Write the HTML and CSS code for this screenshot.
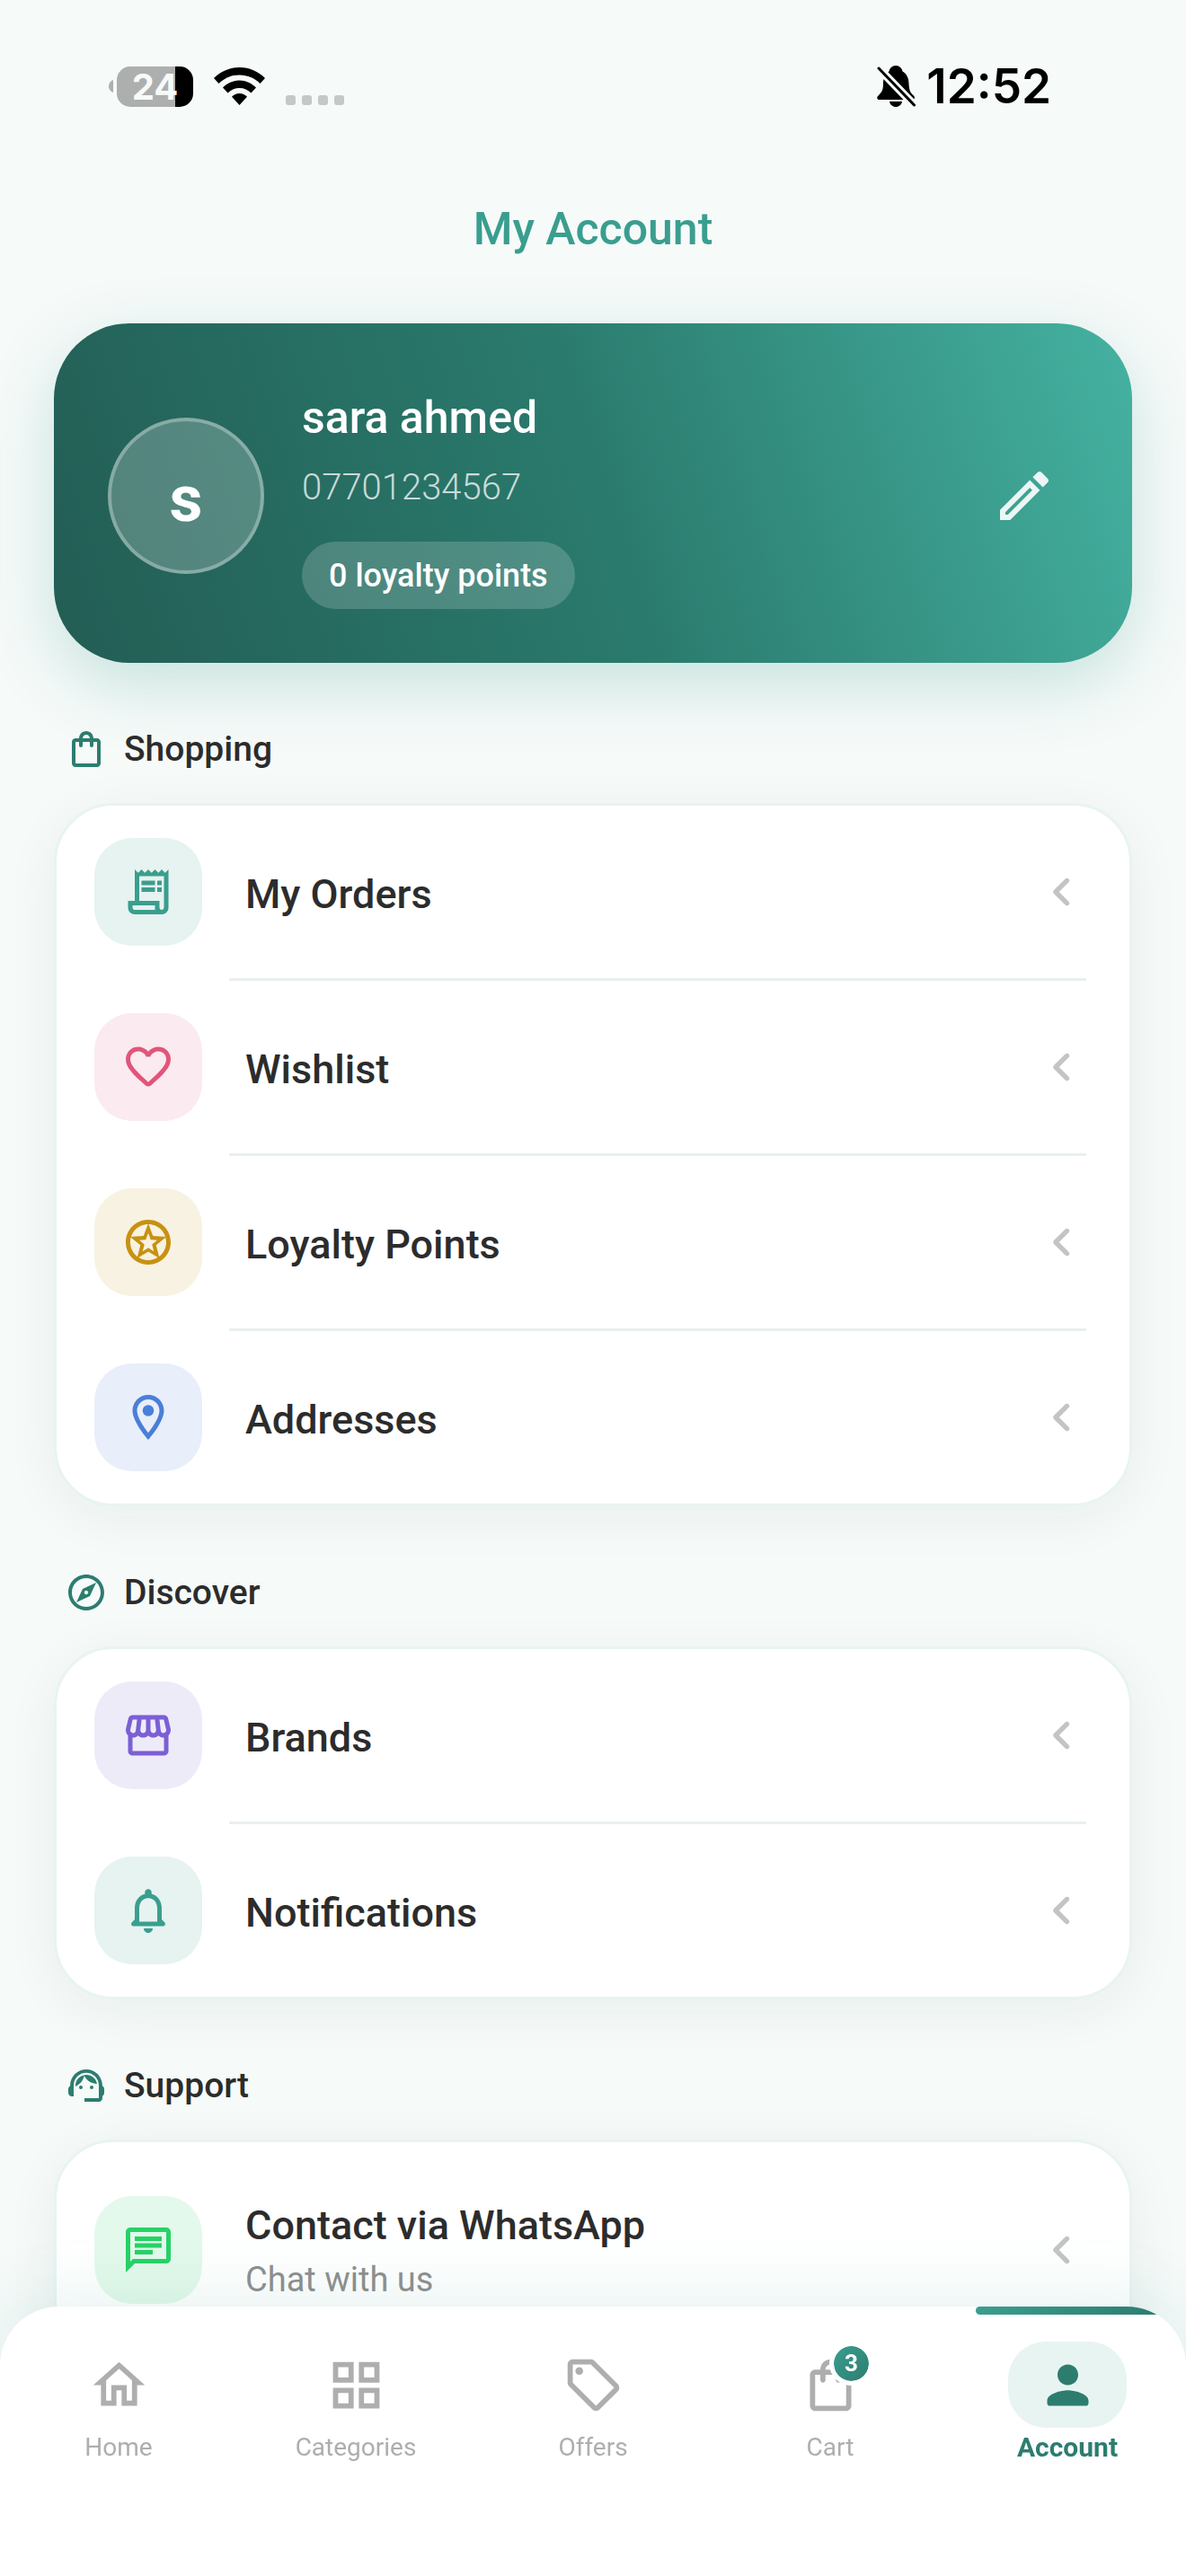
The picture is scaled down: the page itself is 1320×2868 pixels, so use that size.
FILE: index.html
```html
<!DOCTYPE html>
<html lang="en">
<head>
    <meta charset="UTF-8">
    <meta name="viewport" content="width=device-width, initial-scale=1.0">
    <title>My Account</title>
    <link rel="stylesheet" href="styles.css">
</head>
<body>
    <div class="status-bar">
        <div class="status-group">
            <div class="battery">
                <svg class="battery-tip" viewBox="0 0 5 14"><path d="M5 0C2 1 0 4 0 7s2 6 5 7z"/></svg>
                <span class="battery-level">24</span>
            </div>
            <svg class="wifi-icon" viewBox="0 0 57 42">
                <path d="M28.500 0C17.500 0 7.500 4.500 0 12l5.500 6C11.500 12 19.500 8.600 28.500 8.600S45.500 12 51.500 18l5.500-6C49.500 4.500 39.500 0 28.500 0z"/>
                <path d="M28.500 14.500c-7 0-13.500 3-18.500 8l5.500 6c3.500-3.500 8-5.500 13-5.500s9.500 2 13 5.500l5.500-6c-5-5-11.500-8-18.500-8z"/>
                <path d="M28.500 29c-3.300 0-6.300 1.300-8.500 3.800l8.500 9.200 8.500-9.200C34.800 30.300 31.800 29 28.500 29z"/>
            </svg>
            <div class="signal"><i></i><i></i><i></i><i></i></div>
        </div>
        <div class="status-group status-time">
            <svg class="mute-icon" viewBox="0 0 43 46">
                <path d="M21 0c-4 0-7 3-7.500 6.500C9 9 7 14 7 20c0 8-2 10-5.500 13.500C-1 36 .5 38 3 38h36c2.500 0 4-2 2-4.500C37 30 36 28 35.500 20 35.500 14 33 9 28.500 6.500 28 3 25 0 21 0z"/>
                <path d="M14 40h14c-.5 3.500-3.500 6-7 6s-6.500-2.500-7-6z"/>
                <path d="M2 3l39.500 41" stroke="#f6faf9" stroke-width="9"/>
                <path d="M2 3l39.500 41" stroke="#000" stroke-width="3" stroke-linecap="round"/>
            </svg>
            <span>12:52</span>
        </div>
    </div>

    <header class="app-header">
        <h1 class="app-title">My Account</h1>
    </header>

    <main>
        <section class="profile-card">
            <div class="avatar">s</div>
            <div class="profile-info">
                <h2 class="profile-name">sara ahmed</h2>
                <p class="profile-phone">07701234567</p>
                <span class="points-pill">0 loyalty points</span>
            </div>
            <button class="edit-btn" aria-label="Edit profile">
                <svg viewBox="0 0 24 24"><use href="#edit-icon"></use></svg>
            </button>
        </section>

        <section>
            <h2 class="section-title"><svg viewBox="0 0 24 24"><use href="#bag-icon"></use></svg>Shopping</h2>
            <ul class="menu-card">
                <li>
                    <a href="#orders" class="menu-item">
                        <span class="tile tile--teal"><svg viewBox="0 0 24 24"><use href="#receipt-icon"></use></svg></span>
                        <span class="menu-label">My Orders</span>
                        <svg class="chevron" viewBox="0 0 24 24"><use href="#chevron-icon"></use></svg>
                    </a>
                </li>
                <li>
                    <a href="#wishlist" class="menu-item">
                        <span class="tile tile--pink"><svg viewBox="0 0 24 24"><use href="#heart-icon"></use></svg></span>
                        <span class="menu-label">Wishlist</span>
                        <svg class="chevron" viewBox="0 0 24 24"><use href="#chevron-icon"></use></svg>
                    </a>
                </li>
                <li>
                    <a href="#points" class="menu-item">
                        <span class="tile tile--gold"><svg viewBox="0 0 24 24"><use href="#stars-icon"></use></svg></span>
                        <span class="menu-label">Loyalty Points</span>
                        <svg class="chevron" viewBox="0 0 24 24"><use href="#chevron-icon"></use></svg>
                    </a>
                </li>
                <li>
                    <a href="#addresses" class="menu-item">
                        <span class="tile tile--blue"><svg viewBox="0 0 24 24"><use href="#pin-icon"></use></svg></span>
                        <span class="menu-label">Addresses</span>
                        <svg class="chevron" viewBox="0 0 24 24"><use href="#chevron-icon"></use></svg>
                    </a>
                </li>
            </ul>
        </section>

        <section>
            <h2 class="section-title"><svg viewBox="0 0 24 24"><use href="#compass-icon"></use></svg>Discover</h2>
            <ul class="menu-card">
                <li>
                    <a href="#brands" class="menu-item">
                        <span class="tile tile--purple"><svg viewBox="0 0 24 24"><use href="#store-icon"></use></svg></span>
                        <span class="menu-label">Brands</span>
                        <svg class="chevron" viewBox="0 0 24 24"><use href="#chevron-icon"></use></svg>
                    </a>
                </li>
                <li>
                    <a href="#notifications" class="menu-item">
                        <span class="tile tile--teal"><svg viewBox="0 0 24 24"><use href="#bell-icon"></use></svg></span>
                        <span class="menu-label">Notifications</span>
                        <svg class="chevron" viewBox="0 0 24 24"><use href="#chevron-icon"></use></svg>
                    </a>
                </li>
            </ul>
        </section>

        <section>
            <h2 class="section-title"><svg viewBox="0 0 24 24"><use href="#support-icon"></use></svg>Support</h2>
            <ul class="menu-card">
                <li>
                    <a href="#whatsapp" class="menu-item menu-item--tall">
                        <span class="tile tile--green"><svg viewBox="0 0 24 24"><use href="#chat-icon"></use></svg></span>
                        <span class="menu-label">Contact via WhatsApp<small class="menu-hint">Chat with us</small></span>
                        <svg class="chevron" viewBox="0 0 24 24"><use href="#chevron-icon"></use></svg>
                    </a>
                </li>
            </ul>
        </section>
    </main>

    <nav class="bottom-nav">
        <a href="#home" class="nav-item">
            <span class="nav-icon"><svg viewBox="0 0 24 24"><use href="#home-icon"></use></svg></span>
            Home
        </a>
        <a href="#categories" class="nav-item">
            <span class="nav-icon"><svg viewBox="0 0 24 24"><use href="#grid-icon"></use></svg></span>
            Categories
        </a>
        <a href="#offers" class="nav-item">
            <span class="nav-icon"><svg viewBox="0 0 24 24"><use href="#tag-icon"></use></svg></span>
            Offers
        </a>
        <a href="#cart" class="nav-item">
            <span class="nav-icon"><svg viewBox="0 0 24 24"><use href="#bag-icon"></use></svg><span class="cart-badge">3</span></span>
            Cart
        </a>
        <a href="#account" class="nav-item nav-item--active" aria-current="page">
            <span class="nav-icon"><svg viewBox="0 0 24 24"><use href="#person-icon"></use></svg></span>
            Account
        </a>
    </nav>

    <svg style="display: none;">
        <symbol id="edit-icon" viewBox="0 0 24 24">
            <path d="M14.060 9.020l.92.92L5.920 19H5v-.92l9.060-9.060M17.660 3c-.25 0-.51.1-.7.29l-1.830 1.830 3.750 3.750 1.830-1.830c.39-.39.39-1.020 0-1.410l-2.340-2.340c-.2-.2-.45-.29-.71-.29zm-3.600 3.190L3 17.250V21h3.750L17.810 9.940l-3.750-3.750z"/>
        </symbol>
        <symbol id="bag-icon" viewBox="0 0 24 24">
            <path d="M18 6h-2c0-2.210-1.790-4-4-4S8 3.790 8 6H6c-1.100 0-2 .9-2 2v12c0 1.100.9 2 2 2h12c1.100 0 2-.9 2-2V8c0-1.100-.9-2-2-2zm-6-2c1.100 0 2 .9 2 2h-4c0-1.100.9-2 2-2zm6 16H6V8h2v2c0 .55.45 1 1 1s1-.45 1-1V8h4v2c0 .55.45 1 1 1s1-.45 1-1V8h2v12z"/>
        </symbol>
        <symbol id="receipt-icon" viewBox="0 0 24 24">
            <path d="M19.500 3.500L18 2l-1.500 1.500L15 2l-1.500 1.500L12 2l-1.500 1.500L9 2 7.500 3.500 6 2v14H3v3c0 1.660 1.340 3 3 3h12c1.660 0 3-1.340 3-3V2l-1.500 1.500zM15 20H6c-.55 0-1-.45-1-1v-1h10v2zm4-1c0 .55-.45 1-1 1s-1-.45-1-1v-3H8V5h11v14z"/>
            <path d="M9 7h6v2H9zM16 7h2v2h-2zM9 10h6v2H9zM16 10h2v2h-2z"/>
        </symbol>
        <symbol id="heart-icon" viewBox="0 0 24 24">
            <path d="M19.660 3.990c-2.640-1.800-5.900-.96-7.660 1.100-1.760-2.060-5.020-2.910-7.660-1.100-1.400.96-2.280 2.580-2.340 4.290-.14 3.880 3.300 6.990 8.550 11.760l.1.090c.76.69 1.930.69 2.690-.01l.11-.1c5.250-4.760 8.680-7.870 8.550-11.750-.06-1.700-.94-3.320-2.340-4.280zM12.100 18.550l-.1.1-.1-.1C7.140 14.240 4 11.390 4 8.500 4 6.500 5.500 5 7.500 5c1.540 0 3.040.99 3.570 2.360h1.870C13.460 5.990 14.960 5 16.500 5c2 0 3.500 1.500 3.500 3.500 0 2.890-3.140 5.740-7.900 10.050z"/>
        </symbol>
        <symbol id="stars-icon" viewBox="0 0 24 24">
            <path d="M12 2C6.480 2 2 6.480 2 12s4.480 10 10 10 10-4.480 10-10S17.520 2 12 2zm0 18c-4.420 0-8-3.580-8-8s3.580-8 8-8 8 3.580 8 8-3.580 8-8 8z"/>
            <path fill-rule="evenodd" d="M12 3.600l2.100 5.600 6 .4-4.600 3.700 1.500 5.900-5-3-5 3 1.500-5.900-4.600-3.700 6-.4zM12 7.900l-1.100 3-2.900.2 2.300 1.900-.8 3.100 2.500-1.600 2.500 1.600-.8-3.100 2.300-1.900-2.900-.2z"/>
        </symbol>
        <symbol id="pin-icon" viewBox="0 0 24 24">
            <path d="M12 2C8.130 2 5 5.130 5 9c0 5.250 7 13 7 13s7-7.750 7-13c0-3.870-3.130-7-7-7zM7 9c0-2.760 2.240-5 5-5s5 2.240 5 5c0 2.880-2.880 7.190-5 9.880C9.920 16.210 7 11.850 7 9z"/>
            <circle cx="12" cy="9" r="2.500"/>
        </symbol>
        <symbol id="compass-icon" viewBox="0 0 24 24">
            <path d="M12 2C6.480 2 2 6.480 2 12s4.480 10 10 10 10-4.480 10-10S17.520 2 12 2zm0 18c-4.410 0-8-3.590-8-8s3.590-8 8-8 8 3.590 8 8-3.590 8-8 8zm-5.500-2.500l7.510-3.490L17.500 6.500 9.990 9.990 6.500 17.500zm5.500-6.600c.61 0 1.100.49 1.100 1.100s-.49 1.100-1.100 1.100-1.100-.49-1.100-1.100.49-1.100 1.100-1.100z"/>
        </symbol>
        <symbol id="store-icon" viewBox="0 0 24 24">
            <path d="M21.900 8.890l-1.050-4.370c-.22-.9-1-1.520-1.910-1.520H5.050c-.9 0-1.690.63-1.900 1.520L2.100 8.890c-.24 1.020-.02 2.060.62 2.880.08.11.19.19.28.29V19c0 1.100.9 2 2 2h14c1.100 0 2-.9 2-2v-6.940c.09-.09.2-.18.28-.28.64-.82.87-1.870.62-2.890zm-2.990-3.900l1.050 4.370c.1.42.01.84-.25 1.170-.14.18-.44.47-.94.47-.61 0-1.140-.49-1.210-1.140L16.980 5l1.930-.01zM13 5h1.960l.54 4.520c.05.39-.07.78-.33 1.070-.22.26-.54.41-.95.41-.67 0-1.220-.59-1.220-1.310V5zM8.490 9.520L9.040 5H11v4.690c0 .72-.55 1.310-1.290 1.310-.34 0-.65-.15-.89-.41-.25-.29-.37-.68-.33-1.070zm-4.450-.16L5.050 5h1.970l-.58 4.860c-.08.65-.6 1.140-1.210 1.140-.49 0-.8-.29-.93-.47-.27-.32-.36-.75-.26-1.170zM5 19v-6.030c.08.01.15.03.23.03.87 0 1.660-.36 2.240-.95.6.6 1.400.95 2.310.95.87 0 1.650-.36 2.230-.93.59.57 1.390.93 2.290.93.84 0 1.640-.35 2.240-.95.58.59 1.370.95 2.240.95.08 0 .15-.02.23-.03V19H5z"/>
        </symbol>
        <symbol id="bell-icon" viewBox="0 0 24 24">
            <path d="M19.290 17.290L18 16v-5c0-3.070-1.630-5.640-4.500-6.320V4c0-.83-.67-1.500-1.500-1.500s-1.500.67-1.500 1.500v.68C7.640 5.360 6 7.920 6 11v5l-1.290 1.290c-.63.63-.19 1.710.7 1.710h13.170c.9 0 1.340-1.080.71-1.710zM16 17H8v-6c0-2.480 1.510-4.500 4-4.500s4 2.020 4 4.500v6zm-4 5c1.100 0 2-.9 2-2h-4c0 1.100.89 2 2 2z"/>
        </symbol>
        <symbol id="support-icon" viewBox="0 0 24 24">
            <path d="M21 12.220C21 6.730 16.740 3 12 3c-4.690 0-9 3.650-9 9.280-.6.34-1 .98-1 1.720v2c0 1.100.9 2 2 2h1v-6.100c0-3.870 3.130-7 7-7s7 3.130 7 7V19h-8v2h8c1.100 0 2-.9 2-2v-1.220c.59-.31 1-.92 1-1.640v-2.300c0-.7-.41-1.310-1-1.620z"/>
            <circle cx="9" cy="13" r="1"/>
            <circle cx="15" cy="13" r="1"/>
            <path d="M18 11.030C17.520 8.180 15.040 6 12.050 6c-3.030 0-6.290 2.510-6.030 6.450 2.470-1.010 4.330-3.210 4.860-5.890 1.310 2.630 4 4.440 7.120 4.470z"/>
        </symbol>
        <symbol id="chat-icon" viewBox="0 0 24 24">
            <path d="M4 4h16v12H5.170L4 17.170V4m0-2c-1.100 0-1.990.9-1.990 2L2 22l4-4h14c1.100 0 2-.9 2-2V4c0-1.100-.9-2-2-2H4zm2 10h8v2H6v-2zm0-3h12v2H6V9zm0-3h12v2H6V6z"/>
        </symbol>
        <symbol id="chevron-icon" viewBox="0 0 24 24">
            <path d="M14.710 6.710c-.39-.39-1.020-.39-1.410 0L8.710 11.300c-.39.39-.39 1.020 0 1.410l4.590 4.590c.39.39 1.020.39 1.410 0 .39-.39.39-1.020 0-1.410L10.830 12l3.880-3.880c.39-.39.38-1.030 0-1.410z"/>
        </symbol>
        <symbol id="home-icon" viewBox="0 0 24 24">
            <path d="M12 5.690l5 4.500V18h-2v-6H9v6H7v-7.810l5-4.500M12 3L2 12h3v8h6v-6h2v6h6v-8h3L12 3z"/>
        </symbol>
        <symbol id="grid-icon" viewBox="0 0 24 24">
            <path d="M3 3v8h8V3H3zm6 6H5V5h4v4zm-6 4v8h8v-8H3zm6 6H5v-4h4v4zm4-16v8h8V3h-8zm6 6h-4V5h4v4zm-6 4v8h8v-8h-8zm6 6h-4v-4h4v4z"/>
        </symbol>
        <symbol id="tag-icon" viewBox="0 0 24 24">
            <path d="M21.410 11.580l-9-9C12.050 2.220 11.550 2 11 2H4c-1.100 0-2 .9-2 2v7c0 .55.22 1.050.59 1.420l9 9c.36.36.86.58 1.410.58s1.050-.22 1.410-.59l7-7c.37-.36.59-.86.59-1.410s-.23-1.060-.59-1.420zM13 20.010L4 11V4h7v-.01l9 9-7 7.020z"/>
            <circle cx="6.500" cy="6.500" r="1.500"/>
        </symbol>
        <symbol id="person-icon" viewBox="0 0 24 24">
            <path d="M12 12c2.210 0 4-1.790 4-4s-1.790-4-4-4-4 1.790-4 4 1.790 4 4 4zm0 2c-2.670 0-8 1.340-8 4v1c0 .55.45 1 1 1h14c.55 0 1-.45 1-1v-1c0-2.660-5.330-4-8-4z"/>
        </symbol>
    </svg>
</body>
</html>
```

FILE: styles.css
```css
* {
    box-sizing: border-box;
}

body {
    font-family: Roboto, "Open Sans", sans-serif;
    background-color: #f6faf9;
    color: #2c2c2c;
    margin: 0;
}

h1, h2, p, ul {
    margin: 0;
    padding: 0;
}

a {
    color: inherit;
    text-decoration: none;
}

svg {
    display: block;
    flex-shrink: 0;
    fill: currentColor;
}

main {
    padding: 42px 60px 180px;
}

/* Status bar */
.status-bar {
    display: flex;
    justify-content: space-between;
    align-items: center;
    height: 192px;
    padding: 0 150px 0 121px;
    color: #000;
    font-family: Inter, "Liberation Sans", sans-serif;
}

.status-group {
    display: flex;
    align-items: center;
    gap: 23px;
}

.battery {
    display: flex;
    align-items: center;
    gap: 4px;
}

.battery-tip {
    width: 5px;
    height: 14px;
    color: #adafae;
}

.battery-level {
    width: 85px;
    border-radius: 15px;
    background: linear-gradient(to right, #adafae 65px, #000 65px);
    color: #f6faf9;
    font-size: 40px;
    font-weight: 700;
    line-height: 45px;
    text-align: center;
}

.wifi-icon {
    width: 57px;
    height: 42px;
}

.signal {
    display: flex;
    align-items: flex-end;
    gap: 7px;
    height: 42px;
}

.signal i {
    width: 11px;
    height: 11px;
    border-radius: 3px;
    background: #c5c8c7;
}

.status-time {
    gap: 12px;
    font-size: 53px;
    font-weight: 600;
}

.mute-icon {
    width: 43px;
    height: 46px;
}

/* Header */
.app-header {
    text-align: center;
}

.app-title {
    color: #3a9e8f;
    font-size: 50px;
    font-weight: 500;
    line-height: 126px;
}

/* Profile */
.profile-card {
    display: flex;
    align-items: center;
    padding: 66px 60px 60px;
    border-radius: 84px;
    background: linear-gradient(72deg, #235d54, #2a7a6d 50%, #45b2a1);
    box-shadow: 0 24px 72px rgba(58, 158, 143, 0.25);
    color: #fff;
}

.avatar {
    width: 174px;
    height: 174px;
    margin-right: 42px;
    border: 4px solid rgba(255, 255, 255, 0.3);
    border-radius: 50%;
    background: rgba(255, 255, 255, 0.22);
    font-size: 72px;
    font-weight: 700;
    line-height: 174px;
    text-align: center;
}

.profile-info {
    flex: 1;
}

.profile-name {
    font-size: 50px;
    font-weight: 500;
    line-height: 78px;
}

.profile-phone {
    color: rgba(255, 255, 255, 0.75);
    font-size: 40px;
    font-weight: 300;
    line-height: 78px;
    margin-bottom: 21px;
}

.points-pill {
    display: inline-block;
    padding: 2px 30px 0;
    border-radius: 38px;
    background: rgba(255, 255, 255, 0.18);
    font-size: 36px;
    font-weight: 500;
    line-height: 73px;
    vertical-align: top;
}

.edit-btn {
    padding: 24px;
    border: none;
    background: none;
    color: rgba(255, 255, 255, 0.9);
    cursor: pointer;
}

.edit-btn svg {
    width: 72px;
    height: 72px;
}

/* Menu sections */
.section-title {
    display: flex;
    align-items: center;
    gap: 18px;
    margin: 60px 12px 24px;
    font-size: 39px;
    font-weight: 500;
    line-height: 72px;
}

.section-title svg {
    width: 48px;
    height: 48px;
    color: #2d7d6f;
}

.menu-card {
    border: 3px solid #e8f4f2;
    border-radius: 66px;
    background: #fff;
    box-shadow: 0 12px 60px rgba(20, 60, 50, 0.06);
    list-style: none;
}

.menu-card li + li::before {
    content: "";
    display: block;
    height: 3px;
    margin: 0 48px 0 192px;
    background: #e8f0ee;
}

.menu-item {
    display: flex;
    align-items: center;
    padding: 36px 42px;
}

.menu-item--tall {
    padding: 57px 42px;
}

.tile {
    display: flex;
    align-items: center;
    justify-content: center;
    width: 120px;
    height: 120px;
    border-radius: 42px;
}

.tile svg {
    width: 60px;
    height: 60px;
}

.tile--teal {
    background: #e6f3f0;
    color: #3a9e8f;
}

.tile--pink {
    background: #fbeaf0;
    color: #e0567a;
}

.tile--gold {
    background: #f8f2e2;
    color: #c89112;
}

.tile--blue {
    background: #e8eefa;
    color: #4a7fd8;
}

.tile--purple {
    background: #eeebf9;
    color: #7b5fd5;
}

.tile--green {
    background: #e3f9eb;
    color: #25d366;
}

.menu-label {
    flex: 1;
    margin-left: 48px;
    padding-top: 6px;
    font-size: 45px;
    font-weight: 500;
    line-height: 60px;
}

.menu-hint {
    display: block;
    color: #8f8f8f;
    font-size: 38px;
    font-weight: 400;
}

.chevron {
    width: 66px;
    height: 66px;
    color: #c4c4c4;
}

/* Bottom navigation */
.bottom-nav {
    position: fixed;
    right: 0;
    bottom: 0;
    left: 0;
    display: flex;
    height: 300px;
    border-radius: 66px 66px 0 0;
    background: #fff;
    box-shadow: 0 -12px 72px rgba(58, 158, 143, 0.12);
}

.nav-item {
    position: relative;
    display: flex;
    flex: 1;
    flex-direction: column;
    align-items: center;
    padding-top: 39px;
    color: #aeaeae;
    font-size: 28px;
    line-height: 44px;
}

/* cuts the active bar at the rounded corner */
.nav-item:last-child {
    overflow: hidden;
    border-top-right-radius: 66px;
}

.nav-icon {
    position: relative;
    display: flex;
    align-items: center;
    justify-content: center;
    width: 132px;
    height: 96px;
    border-radius: 42px;
}

.nav-icon svg {
    width: 69px;
    height: 69px;
}

.nav-item--active {
    color: #2d7d6f;
    font-size: 30px;
    font-weight: 700;
}

.nav-item--active .nav-icon {
    background: #e8f4f2;
}

.nav-item--active::before {
    content: "";
    position: absolute;
    top: 0;
    right: 30px;
    left: 30px;
    height: 9px;
    border-radius: 6px;
    background: linear-gradient(135deg, #3a9e8f, #2d7d6f);
}

.cart-badge {
    position: absolute;
    top: 0;
    right: 18px;
    width: 49px;
    height: 49px;
    border: 5px solid #fff;
    border-radius: 50%;
    background: linear-gradient(135deg, #3a9e8f, #2d7d6f) padding-box;
    color: #fff;
    font-size: 26px;
    font-weight: 700;
    line-height: 39px;
    text-align: center;
}
```
